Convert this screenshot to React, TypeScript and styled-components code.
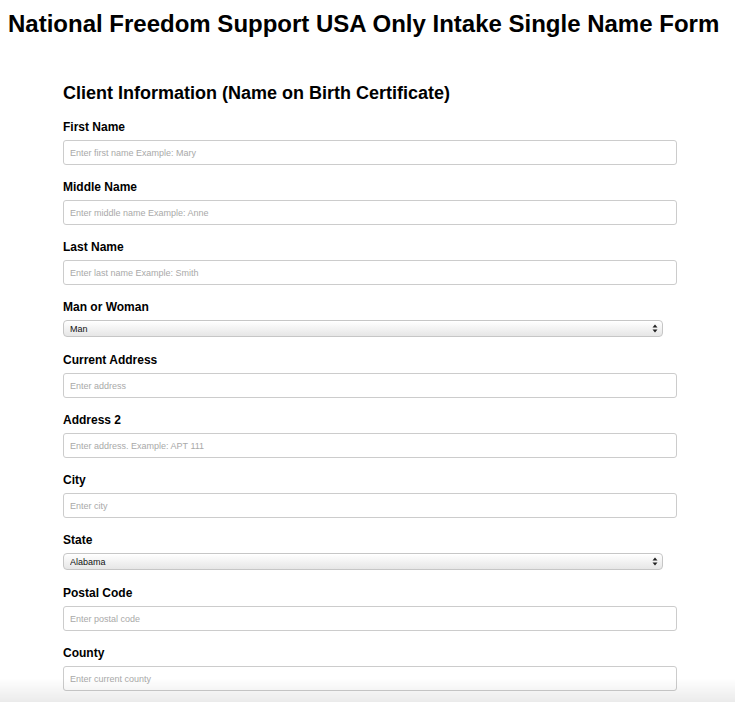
import * as React from 'react';
import styled, { createGlobalStyle } from 'styled-components';

const GlobalStyle = createGlobalStyle`
  body {
    margin: 8px;
    background: #ffffff;
    font-family: "Liberation Sans", Arial, Helvetica, sans-serif;
    color: #000;
  }
`;

const Title = styled.h1`
  margin: 2px 0 0;
  font-size: 24px;
  line-height: 28px;
  font-weight: bold;
  white-space: nowrap;
`;

const Form = styled.form`
  padding: 44px 0 40px 55px;
  width: 614px;
`;

const Heading = styled.h2`
  margin: 0 0 16px;
  font-size: 18px;
  line-height: 22px;
  font-weight: bold;
`;

const Field = styled.div<{ $select?: boolean }>`
  margin-bottom: ${(p) => (p.$select ? '16px' : '15px')};
`;

const Label = styled.label`
  display: block;
  font-size: 12px;
  line-height: 15px;
  font-weight: bold;
  margin-bottom: 5px;
`;

const TextInput = styled.input`
  box-sizing: border-box;
  display: block;
  width: 614px;
  height: 25px;
  padding: 0 6px;
  border: 1px solid #cccccc;
  border-radius: 3px;
  background: #fff;
  font-family: "Liberation Sans", Arial, Helvetica, sans-serif;
  font-size: 9px;
  color: #333;
  outline: none;

  &::placeholder {
    color: #a9a9a9;
  }
`;

const SelectWrap = styled.div`
  position: relative;
  width: 600px;
`;

const Select = styled.select`
  box-sizing: border-box;
  display: block;
  width: 600px;
  height: 17px;
  padding: 0 20px 0 6px;
  appearance: none;
  -webkit-appearance: none;
  border: 1px solid #c6c6c6;
  border-radius: 4px;
  background: linear-gradient(#ffffff, #e6e6e6);
  box-shadow: inset 0 1px 0 #ffffff;
  font-family: "Liberation Sans", Arial, Helvetica, sans-serif;
  font-size: 9px;
  color: #111;
  outline: none;
`;

const Arrows = styled.svg`
  position: absolute;
  right: 5px;
  top: 4px;
  pointer-events: none;
`;

const BottomFade = styled.div`
  position: fixed;
  left: 0;
  right: 0;
  bottom: 0;
  height: 24px;
  background: linear-gradient(rgba(0, 0, 0, 0), rgba(0, 0, 0, 0.08));
  pointer-events: none;
`;

type FieldDef = {
  label: string;
  placeholder?: string;
  options?: string[];
};

const fields: FieldDef[] = [
  { label: 'First Name', placeholder: 'Enter first name Example: Mary' },
  { label: 'Middle Name', placeholder: 'Enter middle name Example: Anne' },
  { label: 'Last Name', placeholder: 'Enter last name Example: Smith' },
  { label: 'Man or Woman', options: ['Man', 'Woman'] },
  { label: 'Current Address', placeholder: 'Enter address' },
  { label: 'Address 2', placeholder: 'Enter address. Example: APT 111' },
  { label: 'City', placeholder: 'Enter city' },
  { label: 'State', options: ['Alabama', 'Alaska', 'Arizona', 'Arkansas', 'California'] },
  { label: 'Postal Code', placeholder: 'Enter postal code' },
  { label: 'County', placeholder: 'Enter current county' },
];

const SelectArrows = () => (
  <Arrows width="6" height="9" viewBox="0 0 6 9">
    <path d="M3 0.5 L5.5 3.5 L0.5 3.5 Z" fill="#222" />
    <path d="M3 8.5 L5.5 5.5 L0.5 5.5 Z" fill="#222" />
  </Arrows>
);

const App = () => {
  return (
    <>
      <GlobalStyle />
      <Title>National Freedom Support USA Only Intake Single Name Form</Title>
      <Form onSubmit={(e) => e.preventDefault()}>
        <Heading>Client Information (Name on Birth Certificate)</Heading>
        {fields.map((f, i) => (
          <Field key={f.label} $select={!!f.options}>
            <Label htmlFor={'f' + i}>{f.label}</Label>
            {f.options ? (
              <SelectWrap>
                <Select id={'f' + i} defaultValue={f.options[0]}>
                  {f.options.map((o) => (
                    <option key={o}>{o}</option>
                  ))}
                </Select>
                <SelectArrows />
              </SelectWrap>
            ) : (
              <TextInput id={'f' + i} type="text" placeholder={f.placeholder} />
            )}
          </Field>
        ))}
      </Form>
      <BottomFade />
    </>
  );
};

export default App;
